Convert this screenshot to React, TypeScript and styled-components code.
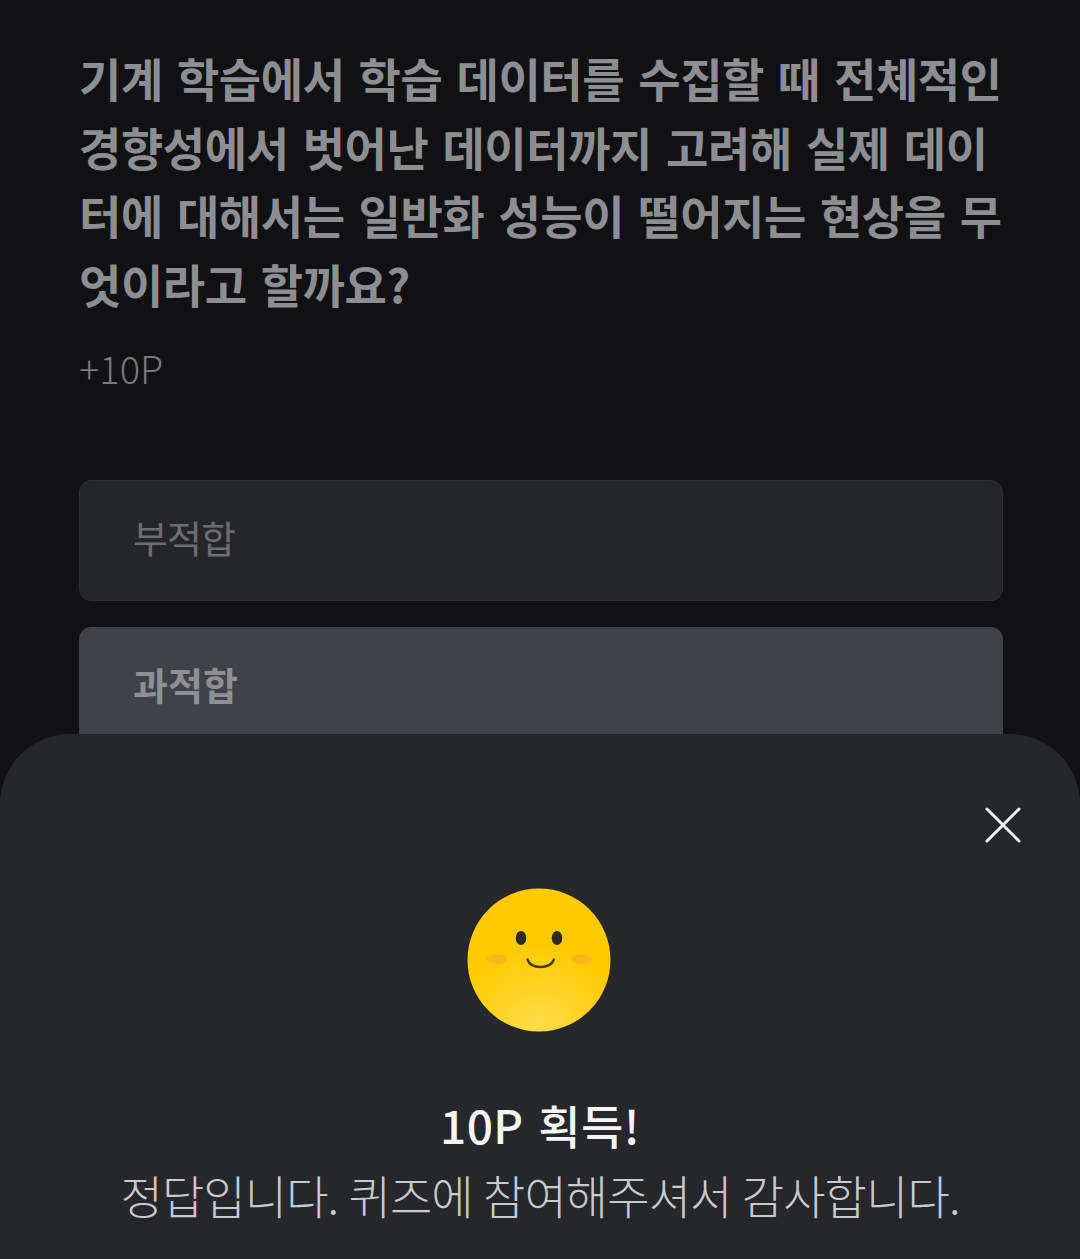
import styled, { createGlobalStyle } from 'styled-components';

const GlobalStyle = createGlobalStyle`
  html, body {
    margin: 0;
    padding: 0;
    background: #111114;
  }
  * {
    box-sizing: border-box;
  }
`;

const fontStack = `"Noto Sans CJK KR", "Noto Sans", sans-serif`;

const Screen = styled.div`
  position: relative;
  width: 1080px;
  height: 1259px;
  overflow: hidden;
  background: #111114;
  font-family: ${fontStack};
`;

const Quiz = styled.main`
  padding: 43px 77px 0 79px;
`;

const Question = styled.h1`
  margin: 0;
  font-size: 46px;
  font-weight: 700;
  line-height: 68.5px;
  letter-spacing: -0.4px;
  word-spacing: 4px;
  color: #8c8e92;
  word-break: break-all;
`;

const Points = styled.div`
  margin-top: 25px;
  font-size: 38px;
  font-weight: 300;
  line-height: 52px;
  letter-spacing: 0;
  color: #77797d;
`;

const Options = styled.div`
  margin-top: 86px;
  display: flex;
  flex-direction: column;
  gap: 26px;
`;

const Option = styled.div<{ $selected?: boolean }>`
  height: 121px;
  padding: 0 0 9px 53px;
  display: flex;
  align-items: center;
  border-radius: 12px;
  border: 1px solid ${(p) => (p.$selected ? '#3f4246' : '#2e3034')};
  background: ${(p) => (p.$selected ? '#3f4246' : '#25262a')};
  color: ${(p) => (p.$selected ? '#8e9094' : '#6c6e72')};
  font-size: 38px;
  font-weight: ${(p) => (p.$selected ? 700 : 400)};
  letter-spacing: ${(p) => (p.$selected ? '0' : '-1px')};
`;

const Sheet = styled.section`
  position: absolute;
  left: 0;
  right: 0;
  top: 734px;
  bottom: 0;
  border-radius: 70px 70px 0 0;
  background: #26272b;
  display: flex;
  flex-direction: column;
  align-items: center;
  padding-top: 154px;
`;

const CloseButton = styled.button`
  position: absolute;
  top: 72px;
  right: 58px;
  width: 38px;
  height: 38px;
  padding: 0;
  border: 0;
  background: none;
  display: block;
`;

const FaceWrap = styled.div`
  width: 144px;
  height: 144px;
  margin-right: 3px;
`;

const Title = styled.div`
  margin-top: 58px;
  font-size: 46px;
  font-weight: 500;
  line-height: 68px;
  letter-spacing: 0.4px;
  word-spacing: 4px;
  color: #f5f5f6;
`;

const Message = styled.div`
  margin-top: 2px;
  font-size: 46px;
  font-weight: 300;
  line-height: 68px;
  letter-spacing: -0.9px;
  word-spacing: 1px;
  color: #c9cacd;
`;

const Smiley = () => (
  <FaceWrap>
    <svg width="144" height="144" viewBox="0 0 144 144">
      <defs>
        <radialGradient id="face" cx="0.5" cy="1" r="0.6">
          <stop offset="0" stopColor="#ffdc4e" />
          <stop offset="1" stopColor="#ffcb00" />
        </radialGradient>
      </defs>
      <circle cx="72" cy="72" r="71.5" fill="url(#face)" />
      <ellipse cx="54" cy="50" rx="5.3" ry="7" fill="#2e2a1e" />
      <ellipse cx="90" cy="50" rx="5.3" ry="7" fill="#2e2a1e" />
      <ellipse cx="30" cy="71" rx="10.5" ry="4.5" fill="#fbb71c" />
      <ellipse cx="114.5" cy="71" rx="10.5" ry="4.5" fill="#fbb71c" />
      <path d="M60.5 71.5 Q63 79 73.5 79 Q84 79 87 71.5" fill="none" stroke="#4a3c14" strokeWidth="2.4" strokeLinecap="round" />
    </svg>
  </FaceWrap>
);

const App = () => {
  return (
    <Screen>
      <GlobalStyle />
      <Quiz>
        <Question>
          기계 학습에서 학습 데이터를 수집할 때 전체적인 경향성에서 벗어난 데이터까지 고려해 실제 데이터에 대해서는 일반화 성능이 떨어지는 현상을 무엇이라고 할까요?
        </Question>
        <Points>+10P</Points>
        <Options>
          <Option>부적합</Option>
          <Option $selected>과적합</Option>
        </Options>
      </Quiz>
      <Sheet>
        <CloseButton aria-label="닫기">
          <svg width="38" height="38" viewBox="0 0 38 38">
            <path d="M3 3 L35 35 M35 3 L3 35" stroke="#f2f2f2" strokeWidth="3" strokeLinecap="round" fill="none" />
          </svg>
        </CloseButton>
        <Smiley />
        <Title>10P 획득!</Title>
        <Message>정답입니다. 퀴즈에 참여해주셔서 감사합니다.</Message>
      </Sheet>
    </Screen>
  );
};

export default App;
